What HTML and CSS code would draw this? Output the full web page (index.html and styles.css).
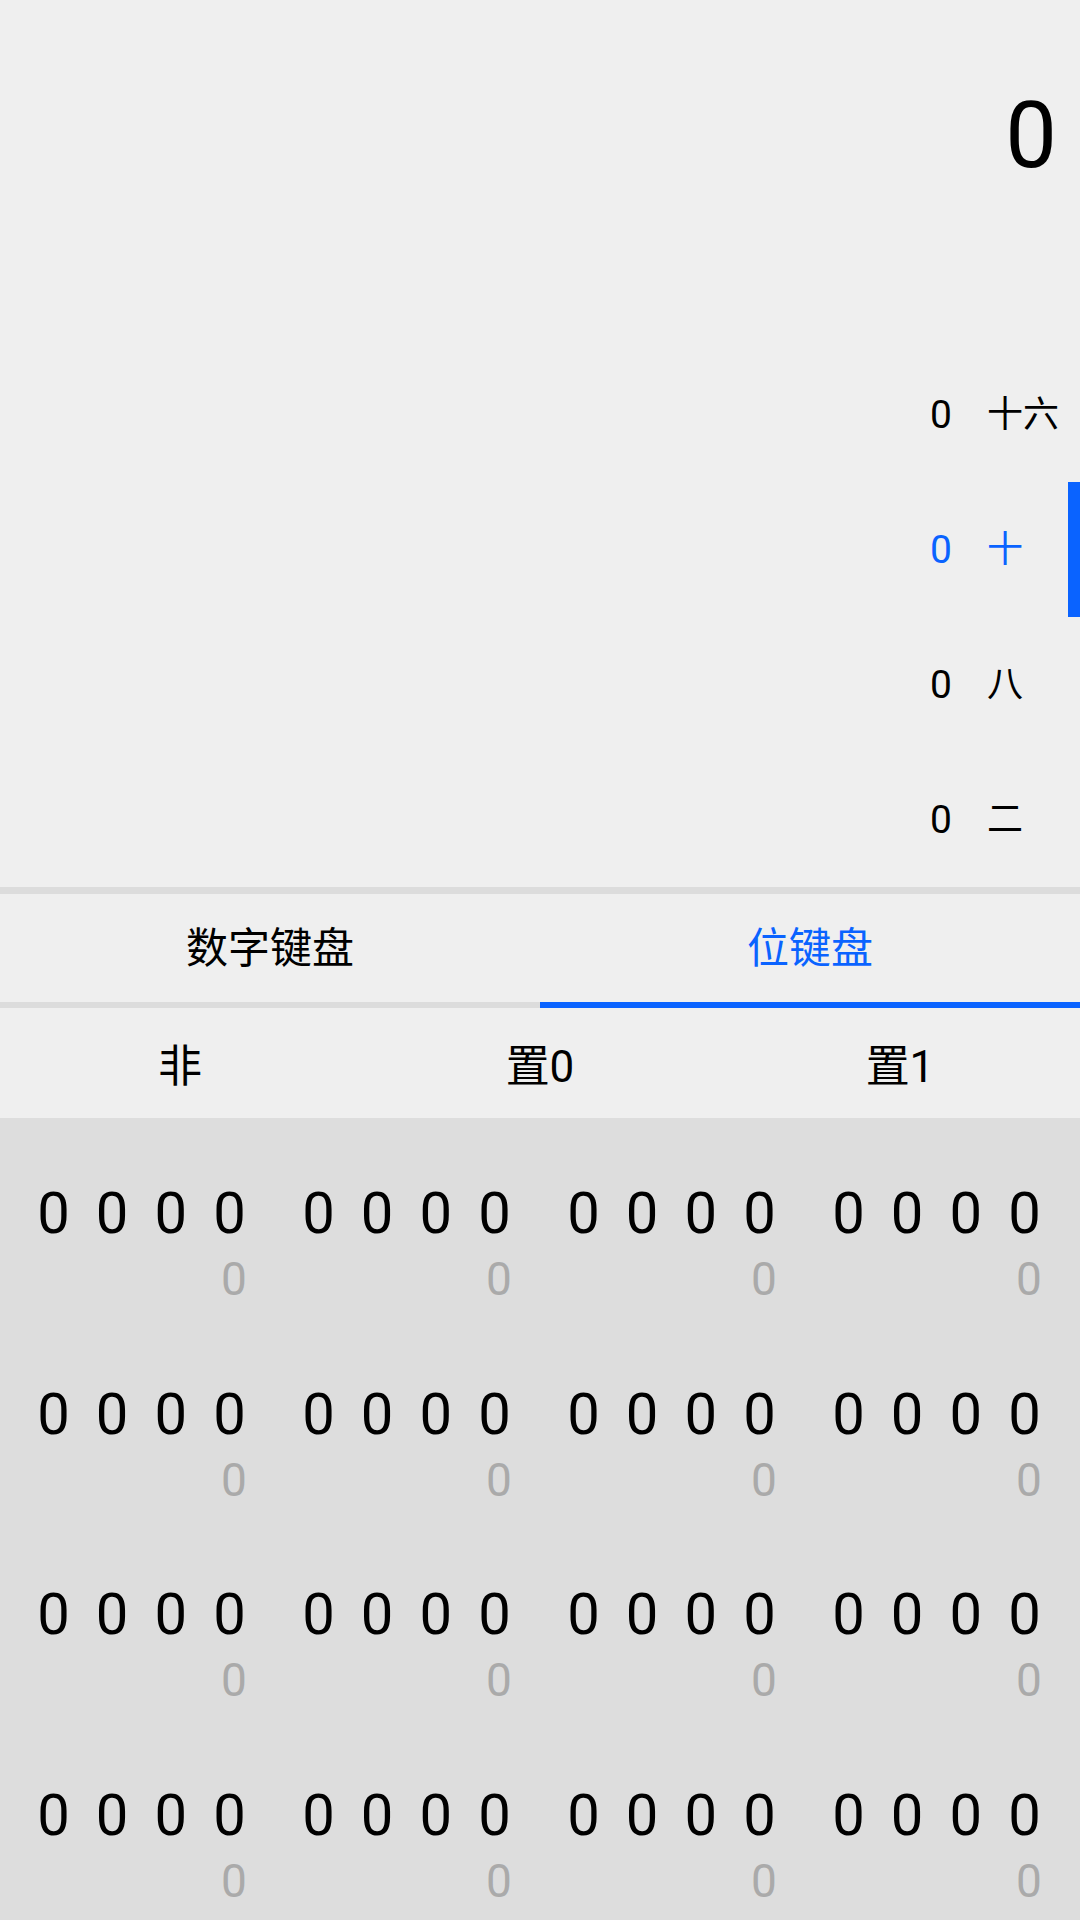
FILE: index.html
```html
<!DOCTYPE html>
<html lang="zh-CN">
<head>
    <meta charset="UTF-8">
    <meta name="viewport" content="width=device-width, initial-scale=1.0">
    <title>程序员计算器</title>
    <link rel="stylesheet" href="styles.css">
</head>
<body>

    <!-- Display: result and radix list -->
    <div class="display">
        <div class="result">0</div>
        <ul class="radix-list">
            <li class="radix-row">
                <span class="radix-value">0</span>
                <span class="radix-name">十六</span>
                <span class="radix-mark"></span>
            </li>
            <li class="radix-row active">
                <span class="radix-value">0</span>
                <span class="radix-name">十</span>
                <span class="radix-mark"></span>
            </li>
            <li class="radix-row">
                <span class="radix-value">0</span>
                <span class="radix-name">八</span>
                <span class="radix-mark"></span>
            </li>
            <li class="radix-row">
                <span class="radix-value">0</span>
                <span class="radix-name">二</span>
                <span class="radix-mark"></span>
            </li>
        </ul>
    </div>

    <div class="divider"></div>

    <!-- Keyboard tabs -->
    <div class="tabs">
        <div class="tab">数字键盘</div>
        <div class="tab active">位键盘</div>
    </div>

    <!-- Bit operations -->
    <div class="ops">
        <div class="op">非</div>
        <div class="op">置0</div>
        <div class="op">置1</div>
    </div>

    <!-- Bit keypad -->
    <div class="keypad">
        <div class="group"><div class="bits"><span class="bit">0</span><span class="bit">0</span><span class="bit">0</span><span class="bit">0</span></div><div class="pos">0</div></div>
        <div class="group"><div class="bits"><span class="bit">0</span><span class="bit">0</span><span class="bit">0</span><span class="bit">0</span></div><div class="pos">0</div></div>
        <div class="group"><div class="bits"><span class="bit">0</span><span class="bit">0</span><span class="bit">0</span><span class="bit">0</span></div><div class="pos">0</div></div>
        <div class="group"><div class="bits"><span class="bit">0</span><span class="bit">0</span><span class="bit">0</span><span class="bit">0</span></div><div class="pos">0</div></div>

        <div class="group"><div class="bits"><span class="bit">0</span><span class="bit">0</span><span class="bit">0</span><span class="bit">0</span></div><div class="pos">0</div></div>
        <div class="group"><div class="bits"><span class="bit">0</span><span class="bit">0</span><span class="bit">0</span><span class="bit">0</span></div><div class="pos">0</div></div>
        <div class="group"><div class="bits"><span class="bit">0</span><span class="bit">0</span><span class="bit">0</span><span class="bit">0</span></div><div class="pos">0</div></div>
        <div class="group"><div class="bits"><span class="bit">0</span><span class="bit">0</span><span class="bit">0</span><span class="bit">0</span></div><div class="pos">0</div></div>

        <div class="group"><div class="bits"><span class="bit">0</span><span class="bit">0</span><span class="bit">0</span><span class="bit">0</span></div><div class="pos">0</div></div>
        <div class="group"><div class="bits"><span class="bit">0</span><span class="bit">0</span><span class="bit">0</span><span class="bit">0</span></div><div class="pos">0</div></div>
        <div class="group"><div class="bits"><span class="bit">0</span><span class="bit">0</span><span class="bit">0</span><span class="bit">0</span></div><div class="pos">0</div></div>
        <div class="group"><div class="bits"><span class="bit">0</span><span class="bit">0</span><span class="bit">0</span><span class="bit">0</span></div><div class="pos">0</div></div>

        <div class="group"><div class="bits"><span class="bit">0</span><span class="bit">0</span><span class="bit">0</span><span class="bit">0</span></div><div class="pos">0</div></div>
        <div class="group"><div class="bits"><span class="bit">0</span><span class="bit">0</span><span class="bit">0</span><span class="bit">0</span></div><div class="pos">0</div></div>
        <div class="group"><div class="bits"><span class="bit">0</span><span class="bit">0</span><span class="bit">0</span><span class="bit">0</span></div><div class="pos">0</div></div>
        <div class="group"><div class="bits"><span class="bit">0</span><span class="bit">0</span><span class="bit">0</span><span class="bit">0</span></div><div class="pos">0</div></div>
    </div>

</body>
</html>
```

FILE: styles.css
```css
html, body {
    margin: 0;
    padding: 0;
}
body {
    width: 1080px;
    height: 1920px;
    overflow: hidden;
    background-color: #efefef;
    color: #000;
    font-family: Roboto, "Noto Sans CJK SC", sans-serif;
}

/* display */
.display {
    height: 887px;
    display: flex;
    flex-direction: column;
}
.result {
    height: 347px;
    box-sizing: border-box;
    padding: 90px 23px 0 0;
    font-size: 92px;
    line-height: 92px;
    text-align: right;
}
.radix-list {
    list-style: none;
    margin: 0;
    padding: 0;
}
.radix-row {
    height: 135px;
    display: flex;
    align-items: center;
    justify-content: flex-end;
    font-size: 39px;
}
.radix-value {
    text-align: right;
}
.radix-name {
    width: 81px;
    margin-left: 35px;
    padding-bottom: 7px;
    font-family: "Noto Sans CJK SC", sans-serif;
    font-size: 36px;
}
.radix-mark {
    width: 12px;
    align-self: stretch;
}
.radix-row.active {
    color: #0a63ff;
}
.radix-row.active .radix-mark {
    background-color: #0a63ff;
}

.divider {
    height: 7px;
    background-color: #dcdcdc;
}

/* tabs */
.tabs {
    display: flex;
}
.tab {
    flex: 1;
    height: 108px;
    box-sizing: border-box;
    padding-bottom: 8px;
    display: flex;
    align-items: center;
    justify-content: center;
    border-bottom: 6px solid #dcdcdc;
    font-family: "Noto Sans CJK SC", sans-serif;
    font-size: 42px;
}
.tabs .tab {
    height: 114px;
}
.tab.active {
    color: #0a63ff;
    border-bottom-color: #0a63ff;
}

/* bit operations */
.ops {
    height: 110px;
    display: flex;
}
.op {
    flex: 1;
    display: flex;
    align-items: center;
    justify-content: center;
    font-size: 44px;
}

/* keypad */
.keypad {
    height: 802px;
    box-sizing: border-box;
    padding: 0 11px 0 9px;
    background-color: #dddddd;
    display: grid;
    grid-template-columns: repeat(4, 1fr);
    grid-template-rows: repeat(4, 1fr);
}
.group {
    display: flex;
    flex-direction: column;
    align-items: center;
    padding-top: 66px;
}
.bits {
    display: flex;
}
.bit {
    width: 58.7px;
    text-align: center;
    font-size: 58px;
    line-height: 58px;
}
.pos {
    width: 234.8px;
    box-sizing: border-box;
    padding-right: 12px;
    margin-top: 14px;
    text-align: right;
    font-size: 46px;
    line-height: 46px;
    color: #aaaaaa;
}
```
